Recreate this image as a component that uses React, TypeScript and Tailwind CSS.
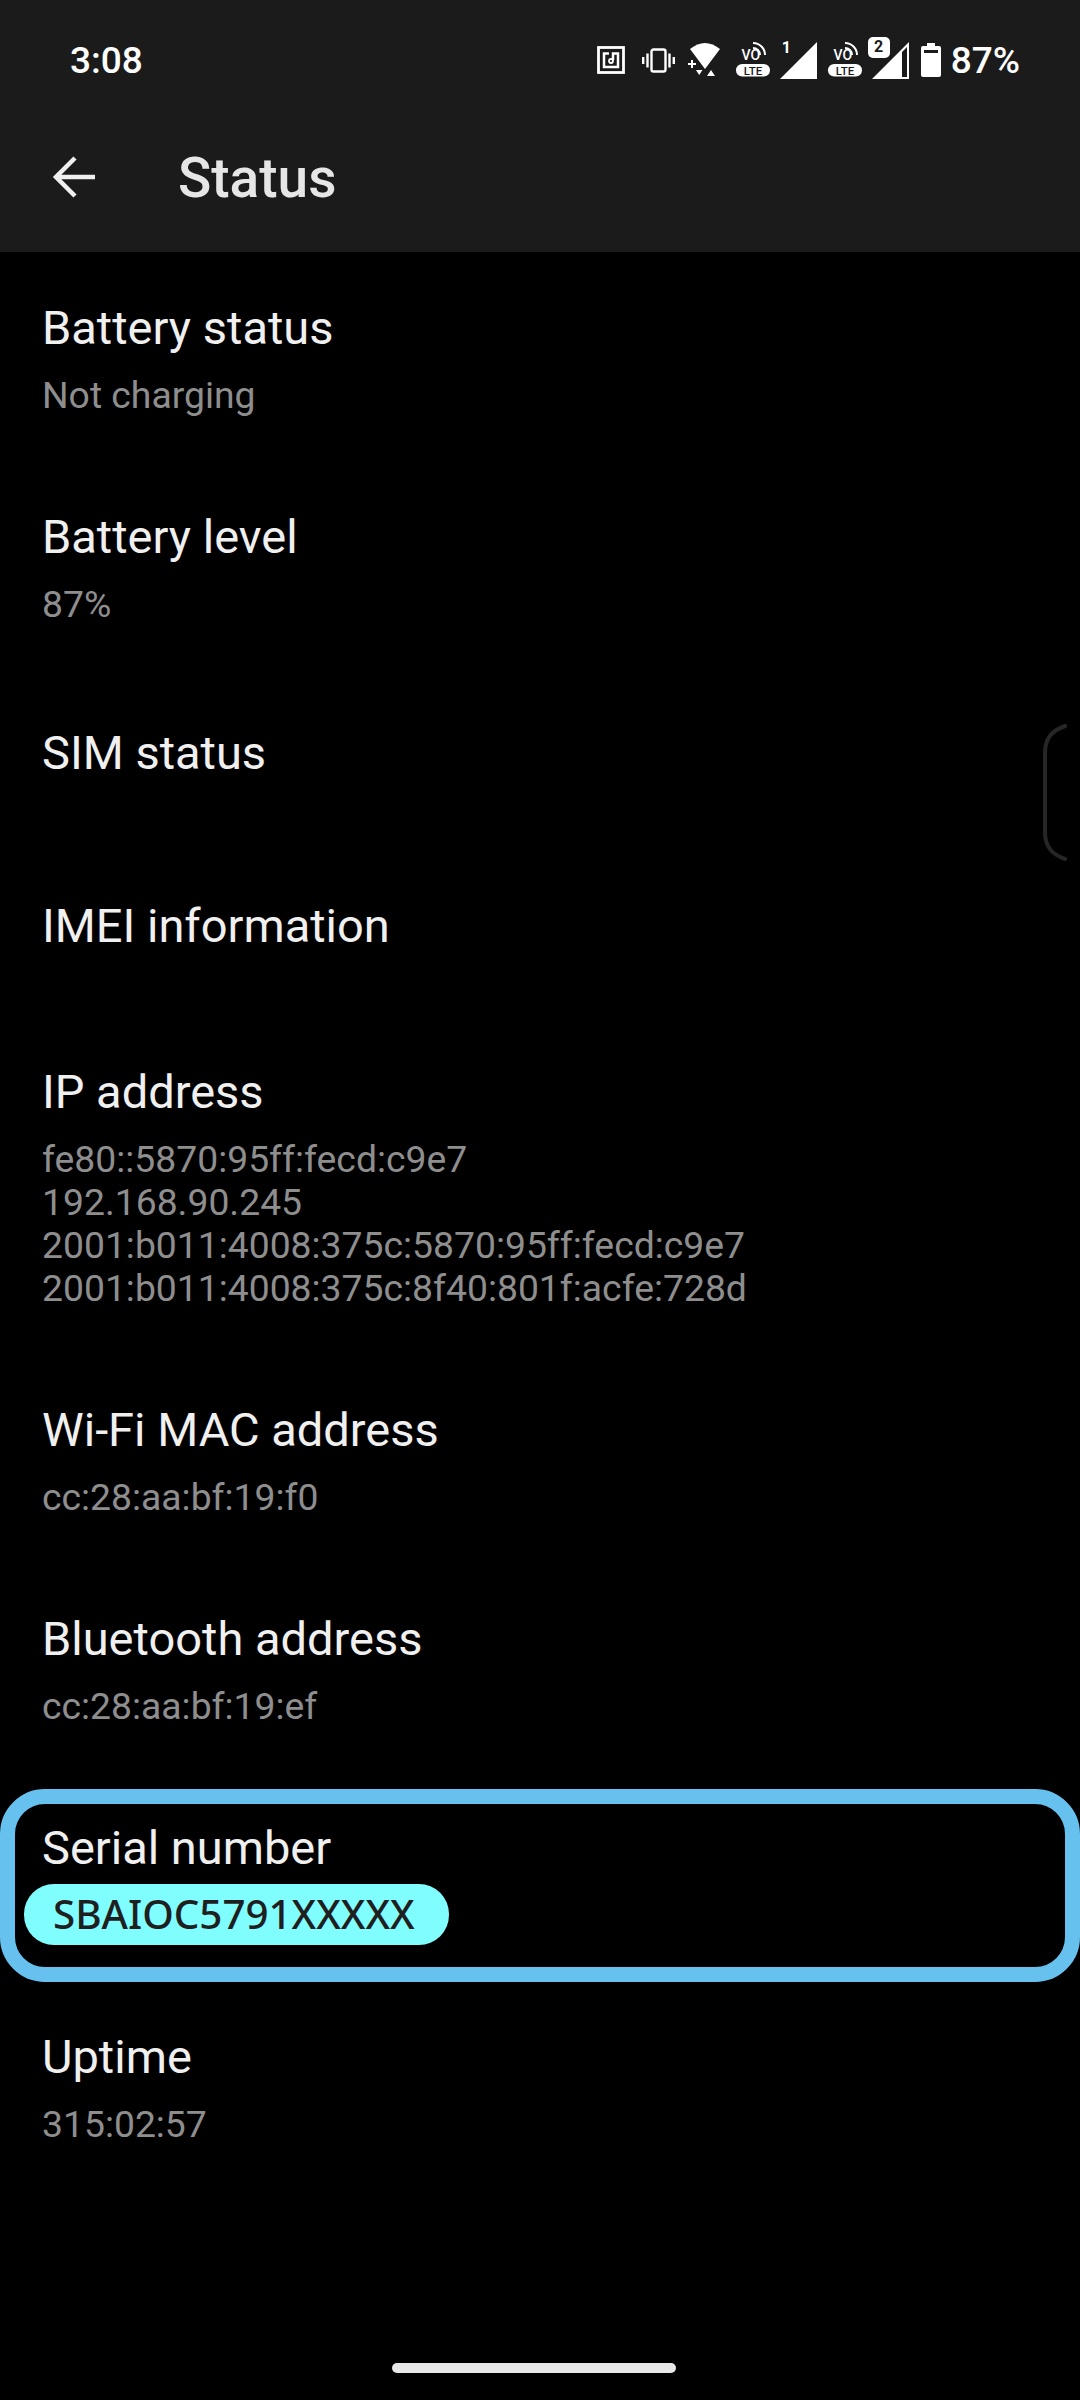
import React from 'react';

const font = "font-['Roboto',sans-serif]";

const NfcIcon = () => (
    <svg width="28" height="28" viewBox="0 0 28 28" fill="none" stroke="white">
        <rect x="1.5" y="1.5" width="25" height="25" strokeWidth="2.8" />
        <path d="M12 7.5H7V21H21V7.5H16V14" strokeWidth="2.5" />
        <circle cx="14" cy="15" r="2" strokeWidth="1.8" />
    </svg>
);

const VibrateIcon = () => (
    <svg width="33" height="25" viewBox="0 0 33 25" fill="none" stroke="white" strokeWidth="2.4">
        <rect x="9.5" y="1.5" width="14" height="22" rx="2" />
        <path d="M5.5 5.5V19.5M1.2 9V16M27.5 5.5V19.5M31.8 9V16" />
    </svg>
);

const WifiIcon = () => (
    <svg width="33" height="34" viewBox="0 0 33 34" fill="white">
        <path d="M2 6Q17 -6 32 6L17 26Z" />
        <path d="M3 17H5V20H8V22H5V25H3V22H0V20H3Z" />
        <path d="M8 27H14.5L11.2 32Z" />
        <path d="M23 27L27 33H19Z" />
    </svg>
);

const VolteIcon = () => (
    <svg width="35" height="36" viewBox="0 0 35 36" fill="none">
        <text x="6.5" y="18" fill="white" fontSize="14" fontWeight="500" fontFamily="Roboto, sans-serif">VO</text>
        <path d="M18 1A12 12 0 0 1 30 13M18 6A7 7 0 0 1 25 13" stroke="white" strokeWidth="2" />
        <rect x="1" y="22" width="34" height="12.5" rx="6.2" fill="white" />
        <text x="18" y="32.5" fill="#1b1b1b" fontSize="11.5" fontWeight="500" textAnchor="middle" fontFamily="Roboto, sans-serif">LTE</text>
    </svg>
);

const SignalFull = () => (
    <div className="relative h-[37px] w-[37px]">
        <svg width="37" height="37" viewBox="0 0 37 37" fill="white">
            <path d="M37 0V37H0Z" />
        </svg>
        <span className={`absolute left-[2px] top-[-3px] text-[16px] font-bold leading-[18px] text-white ${font}`}>1</span>
    </div>
);

const SignalPartial = () => (
    <div className="relative h-[37px] w-[37px]">
        <svg width="37" height="37" viewBox="0 0 37 37" fill="white">
            <path fillRule="evenodd" d="M37 0V37H0ZM35 5L30 10V35H35Z" />
        </svg>
        <span className={`absolute left-[-4px] top-[-5px] flex h-[21px] w-[22px] items-center justify-center rounded-[5px] bg-white text-[16px] font-bold text-[#1b1b1b] ${font}`}>2</span>
    </div>
);

const BatteryIcon = () => (
    <svg width="20" height="34" viewBox="0 0 20 34" fill="white">
        <path fillRule="evenodd" d="M6 0H14V3H18Q20 3 20 5V32Q20 34 18 34H2Q0 34 0 32V5Q0 3 2 3H6ZM3 7V10H17V7Z" />
    </svg>
);

const Row = ({ title, lines, className = '' }: { title: string; lines?: string[]; className?: string }) => (
    <div className={`flex flex-col px-[42px] ${lines ? 'pb-[44.5px] pt-[45.5px]' : 'justify-center'} ${className}`}>
        <div className={`h-[60px] text-[47px] leading-[60px] text-[#f0f0f0] ${font}`}>{title}</div>
        {lines && (
            <div className={`mt-[16px] text-[37.3px] leading-[43px] text-[#8e8e8e] ${font}`}>
                {lines.map(l => <div key={l}>{l}</div>)}
            </div>
        )}
    </div>
);

export default function App() {
    return (
        <div className="relative flex min-h-[2400px] w-[1080px] flex-col overflow-hidden bg-black">
            <div className="bg-[#1b1b1b]">
                <div className="flex h-[102px] items-center pt-[18px]">
                    <span className={`ml-[70px] mt-[2px] text-[37px] font-medium text-white ${font}`}>3:08</span>
                    <div className="ml-auto flex items-center">
                        <NfcIcon />
                        <div className="ml-[17px]"><VibrateIcon /></div>
                        <div className="ml-[13px]"><WifiIcon /></div>
                        <div className="ml-[14px]"><VolteIcon /></div>
                        <div className="ml-[10px]"><SignalFull /></div>
                        <div className="ml-[10px]"><VolteIcon /></div>
                        <div className="ml-[10px]"><SignalPartial /></div>
                        <div className="ml-[12px]"><BatteryIcon /></div>
                        <span className={`ml-[10px] mr-[60px] mt-[2px] text-[37px] font-medium text-white ${font}`}>87%</span>
                    </div>
                </div>
                <div className="flex h-[150px] items-center">
                    <svg className="ml-[52px]" width="44" height="44" viewBox="0 0 44 44" fill="none" stroke="#f0f0f0" strokeWidth="4.5">
                        <path d="M43 22H4M23 3L4 22L23 41" />
                    </svg>
                    <span className={`ml-[82px] mt-[2px] text-[55px] font-medium text-[#e6e6e6] ${font}`}>Status</span>
                </div>
            </div>

            <Row title="Battery status" lines={['Not charging']} />
            <Row title="Battery level" lines={['87%']} />
            <Row title="SIM status" className="h-[165px]" />
            <Row title="IMEI information" className="h-[181px]" />
            <Row title="IP address" lines={['fe80::5870:95ff:fecd:c9e7', '192.168.90.245', '2001:b011:4008:375c:5870:95ff:fecd:c9e7', '2001:b011:4008:375c:8f40:801f:acfe:728d']} />
            <Row title="Wi-Fi MAC address" lines={['cc:28:aa:bf:19:f0']} />
            <Row title="Bluetooth address" lines={['cc:28:aa:bf:19:ef']} />

            {/* highlighted serial number */}
            <div className="mt-[17px] flex h-[193px] flex-col rounded-[45px] border-[15px] border-[#67c1ef] pt-[14px]">
                <div className={`ml-[27px] h-[60px] text-[47px] leading-[60px] text-[#f0f0f0] ${font}`}>Serial number</div>
                <div className="ml-[9px] mt-[6px] flex h-[61px] w-[425px] items-center rounded-[30px] bg-[#80fdff] pl-[29px] font-['Noto_Sans',sans-serif] text-[40.3px] font-medium text-[#1f1f1f]">SBAIOC5791XXXXX</div>
            </div>

            <div className="mt-[-1px]">
                <Row title="Uptime" lines={['315:02:57']} />
            </div>

            <svg className="absolute left-[1041px] top-[723px]" width="26" height="139" viewBox="0 0 26 139" fill="none" stroke="#262626" strokeWidth="4" strokeLinecap="round">
                <path d="M24 3C10 8 4 16 4 30V109C4 123 10 131 24 136" />
            </svg>

            <div className="mb-[27px] mt-auto flex justify-center">
                <div className="ml-[-12px] h-[10px] w-[284px] rounded-full bg-[#e8e8e8]" />
            </div>
        </div>
    );
}
